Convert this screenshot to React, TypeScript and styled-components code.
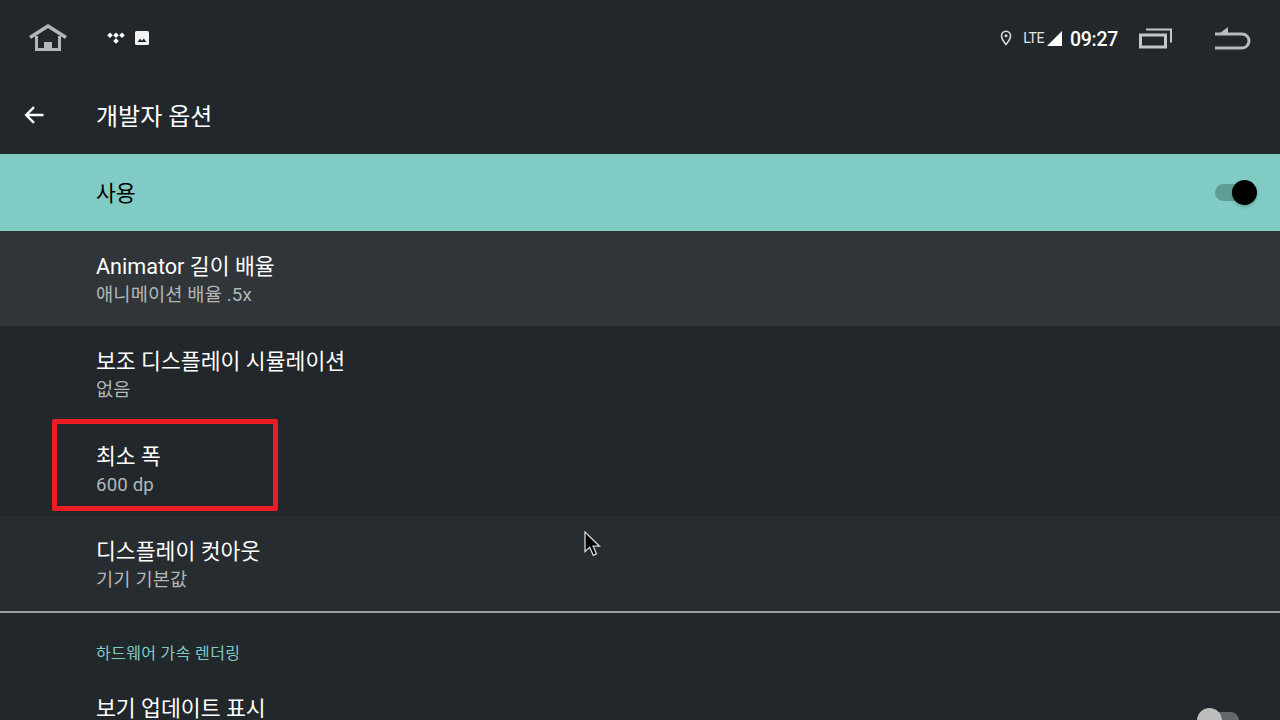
import styled, { createGlobalStyle } from "styled-components";

const GlobalStyle = createGlobalStyle`
  html, body {
    margin: 0;
    padding: 0;
    background: #22272b;
    overflow: hidden;
  }
  body {
    font-family: Roboto, "Noto Sans CJK KR", sans-serif;
  }
`;

const rows = [
  { title: "Animator 길이 배율", sub: "애니메이션 배율 .5x", tone: "focus" },
  { title: "보조 디스플레이 시뮬레이션", sub: "없음", tone: "plain" },
  { title: "최소 폭", sub: "600 dp", tone: "plain" },
  { title: "디스플레이 컷아웃", sub: "기기 기본값", tone: "hover" },
] as const;

function HomeIcon() {
  return (
    <svg width="38" height="28" viewBox="0 0 38 28">
      <path d="M1 13.500 19 2l18 11.500" fill="none" stroke="#b4b6b8" strokeWidth="3.500" />
      <path d="M7.500 12v13.500h23V12" fill="none" stroke="#b4b6b8" strokeWidth="3" />
      <rect x="15" y="18" width="8" height="7" fill="#b4b6b8" />
    </svg>
  );
}

function TidalIcon() {
  return (
    <svg width="18" height="14" viewBox="0 0 18 14">
      <path
        fill="#fff"
        d="M3 1.500 5.800 4.300 3 7.100.2 4.300zM9 1.500l2.800 2.800L9 7.100 6.200 4.300zM15 1.500l2.800 2.800L15 7.100l-2.800-2.800zM9 7.200 11.800 10 9 12.800 6.200 10z"
      />
    </svg>
  );
}

function ImageIcon() {
  return (
    <svg width="14" height="14" viewBox="0 0 14 14">
      <rect width="14" height="14" rx="1.500" fill="#f2f2f2" />
      <path d="M2.500 11 5 7.800l1.800 2L8.800 7.500l2.700 3.500z" fill="#22272b" />
    </svg>
  );
}

function PinIcon() {
  return (
    <svg width="12" height="16" viewBox="0 0 12 16">
      <path
        d="M6 1.200a4.500 4.500 0 0 0-4.500 4.500C1.500 9 6 14.500 6 14.500s4.500-5.500 4.500-8.800A4.500 4.500 0 0 0 6 1.200z"
        fill="none"
        stroke="#d8d9da"
        strokeWidth="1.600"
      />
      <circle cx="6" cy="5.800" r="1.500" fill="#d8d9da" />
    </svg>
  );
}

function SignalIcon() {
  return (
    <svg width="15" height="15" viewBox="0 0 15 15">
      <path d="M15 0v15H0z" fill="#fff" />
    </svg>
  );
}

function RecentsIcon() {
  return (
    <svg width="34" height="22" viewBox="0 0 34 22">
      <rect x="1.500" y="8" width="25" height="12" fill="none" stroke="#c4c6c7" strokeWidth="3" />
      <path d="M7 2.500h25v13" fill="none" stroke="#c4c6c7" strokeWidth="2" />
    </svg>
  );
}

function BackIcon() {
  return (
    <svg width="36" height="24" viewBox="0 0 36 24">
      <path d="M0 8h27a7 7 0 0 1 0 14H0" fill="none" stroke="#b8babb" strokeWidth="3" />
      <path d="M13 1v6H5z" fill="#b8babb" />
    </svg>
  );
}

function ArrowIcon() {
  return (
    <svg width="20" height="20" viewBox="0 0 20 20">
      <path d="M19.500 10H2.500M10 2.200 2.200 10l7.800 7.800" fill="none" stroke="#fff" strokeWidth="2.400" />
    </svg>
  );
}

function CursorIcon() {
  return (
    <svg width="18" height="27" viewBox="0 0 18 27">
      <path
        d="M1 1v19.500l4.800-4.200 3.400 8 3.300-1.400-3.400-7.700h6.400z"
        fill="#000"
        stroke="#d4d4d4"
        strokeWidth="1.300"
      />
    </svg>
  );
}

export default function App() {
  return (
    <Screen>
      <GlobalStyle />
      <StatusBar>
        <HomeSlot>
          <HomeIcon />
        </HomeSlot>
        <Notifications>
          <TidalIcon />
          <ImageIcon />
        </Notifications>
        <Spacer />
        <PinSlot>
          <PinIcon />
        </PinSlot>
        <Lte>LTE</Lte>
        <SignalIcon />
        <Clock>09:27</Clock>
        <RecentsSlot>
          <RecentsIcon />
        </RecentsSlot>
        <BackSlot>
          <BackIcon />
        </BackSlot>
      </StatusBar>

      <AppBar>
        <ArrowSlot>
          <ArrowIcon />
        </ArrowSlot>
        <AppTitle>개발자 옵션</AppTitle>
      </AppBar>

      <MasterRow>
        <MasterLabel>사용</MasterLabel>
        <Switch $on />
      </MasterRow>

      {rows.map((r) => (
        <Row key={r.title} $tone={r.tone}>
          <RowTitle>{r.title}</RowTitle>
          <RowSub>{r.sub}</RowSub>
        </Row>
      ))}

      <Divider />
      <Category>하드웨어 가속 렌더링</Category>
      <SwitchRow>
        <SwitchTitle>보기 업데이트 표시</SwitchTitle>
        <Switch />
      </SwitchRow>

      <RedBox />
      <Cursor>
        <CursorIcon />
      </Cursor>
    </Screen>
  );
}

const Screen = styled.div`
  position: relative;
  width: 1280px;
  height: 720px;
  overflow: hidden;
  background: #22272b;
`;

const StatusBar = styled.div`
  display: flex;
  align-items: center;
  height: 76px;
  color: #fff;
`;

const HomeSlot = styled.div`
  display: flex;
  width: 107px;
  padding-left: 29px;
  box-sizing: border-box;
`;

const Notifications = styled.div`
  display: flex;
  align-items: center;
  gap: 10px;
`;

const Spacer = styled.div`
  flex: 1;
`;

const PinSlot = styled.div`
  display: flex;
  margin-right: 11px;
`;

const Lte = styled.span`
  font-size: 14px;
  letter-spacing: -0.4px;
  color: #e6e6e6;
  margin-right: 3px;
`;

const Clock = styled.span`
  font-size: 19.5px;
  font-weight: 500;
  letter-spacing: -0.3px;
  color: #fff;
  margin: 2px 0 0 8px;
  width: 69px;
`;

const RecentsSlot = styled.div`
  display: flex;
  width: 76px;
`;

const BackSlot = styled.div`
  display: flex;
  padding-right: 29px;
`;

const AppBar = styled.div`
  display: flex;
  align-items: center;
  height: 78px;
`;

const ArrowSlot = styled.div`
  display: flex;
  width: 96px;
  padding-left: 24px;
  box-sizing: border-box;
`;

const AppTitle = styled.div`
  font-size: 24px;
  color: #fff;
  padding-bottom: 2px;
`;

const MasterRow = styled.div`
  display: flex;
  align-items: center;
  justify-content: space-between;
  height: 77px;
  padding: 0 31px 0 96px;
  background: #80cbc4;
`;

const MasterLabel = styled.div`
  font-size: 21.6px;
  color: #000;
  padding-bottom: 2px;
`;

const Switch = styled.div<{ $on?: boolean }>`
  position: relative;
  width: 34px;
  height: 17px;
  border-radius: 9px;
  background: ${(p) => (p.$on ? "#5f9e98" : "#62686b")};

  &::after {
    content: "";
    position: absolute;
    top: -4px;
    left: ${(p) => (p.$on ? "17px" : "-8px")};
    width: 25px;
    height: 25px;
    border-radius: 50%;
    background: ${(p) => (p.$on ? "#000" : "#bdbdbd")};
    box-shadow: 0 2px 3px rgba(0, 0, 0, 0.2);
  }
`;

const Row = styled.div<{ $tone: "plain" | "focus" | "hover" }>`
  display: flex;
  flex-direction: column;
  justify-content: center;
  height: 95px;
  padding: 4px 0 0 96px;
  box-sizing: border-box;
  background: ${(p) =>
    p.$tone === "focus" ? "#30353a" : p.$tone === "hover" ? "#272c30" : "#22272b"};
`;

const RowTitle = styled.div`
  font-size: 21.6px;
  line-height: 28px;
  color: #fff;
`;

const RowSub = styled.div`
  font-size: 18.67px;
  line-height: 28px;
  letter-spacing: 0.15px;
  color: #b3b5b7;
`;

const Divider = styled.div`
  height: 2px;
  background: #9a9c9d;
`;

const Category = styled.div`
  display: flex;
  align-items: center;
  height: 78px;
  padding: 0 0 1px 96px;
  box-sizing: border-box;
  font-size: 16px;
  letter-spacing: 0.35px;
  color: #80cbc4;
`;

const SwitchRow = styled.div`
  display: flex;
  align-items: center;
  justify-content: space-between;
  height: 58px;
  padding: 0 41px 0 96px;
`;

const SwitchTitle = styled(RowTitle)`
  align-self: flex-start;
  padding-top: 4px;
`;

const RedBox = styled.div`
  position: absolute;
  left: 52px;
  top: 419px;
  width: 226px;
  height: 92px;
  box-sizing: border-box;
  border: 5px solid #ed1c24;
  border-radius: 2px;
`;

const Cursor = styled.div`
  position: absolute;
  left: 584px;
  top: 531px;
  display: flex;
`;
